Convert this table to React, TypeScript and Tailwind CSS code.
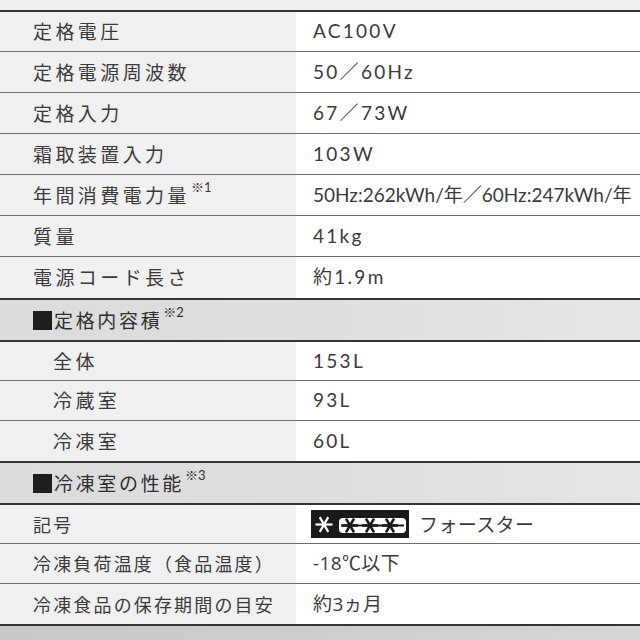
import React from "react";

const jp = { fontFamily: '"Noto Sans CJK JP", sans-serif' };
const lat = { fontFamily: 'Lato, "Noto Sans CJK JP", sans-serif' };
const os = { fontFamily: '"Open Sans", "Noto Sans CJK JP", sans-serif' };

function Sup({ n }: { n: string }) {
  return (
    <span className="relative -top-[7px] ml-[1px] text-[13px] tracking-normal" style={lat}>
      ※{n}
    </span>
  );
}

function Row({
  label,
  value,
  indent = false,
  valueStyle = lat,
  valueCls = "text-[19px] tracking-[0.12em]",
  labelCls = "text-[19px] tracking-[0.18em]",
  h = "h-[41px]",
}: {
  label: React.ReactNode;
  value: React.ReactNode;
  indent?: boolean;
  valueStyle?: React.CSSProperties;
  valueCls?: string;
  labelCls?: string;
  h?: string;
}) {
  return (
    <div className={`flex ${h}`}>
      <div
        className={`w-[296px] shrink-0 bg-[#f0f0f0] flex items-center ${indent ? "pl-[53px]" : "pl-[33px]"} text-[#3a3a3a] whitespace-nowrap ${labelCls}`}
        style={jp}
      >
        {label}
      </div>
      <div
        className={`flex-1 bg-white flex items-center pl-[17px] text-[#3a3a3a] whitespace-nowrap overflow-hidden ${valueCls}`}
        style={valueStyle}
      >
        {value}
      </div>
    </div>
  );
}

function Header({ children }: { children: React.ReactNode }) {
  return (
    <div
      className="h-[40px] flex items-center pl-[33px] bg-gradient-to-r from-[#dcdcdc] via-[#dedede] to-[#e6e6e6] text-[#2e2e2e] text-[19px] tracking-[0.14em]"
      style={jp}
    >
      <span className="inline-block w-[19px] h-[19px] bg-[#1e1e1e] mr-[2px]" />
      {children}
    </div>
  );
}

const Dark = () => <div className="h-[2px] bg-[#353535]" />;

function Badge() {
  const star = (cx: number, cy: number, r: number, color: string, w: number) => {
    const dx = r * Math.cos(Math.PI / 3);
    const dy = r * Math.sin(Math.PI / 3);
    return (
      <g stroke={color} strokeWidth={w} strokeLinecap="butt">
        <line x1={cx - r} y1={cy} x2={cx + r} y2={cy} />
        <line x1={cx - dx} y1={cy - dy} x2={cx + dx} y2={cy + dy} />
        <line x1={cx + dx} y1={cy - dy} x2={cx - dx} y2={cy + dy} />
      </g>
    );
  };
  return (
    <svg width="98" height="28" viewBox="0 0 98 28" className="shrink-0">
      <rect x="0" y="0" width="98" height="28" fill="#1a1a1a" />
      {star(13, 14.5, 8.5, "#ffffff", 2.2)}
      <rect x="28" y="8" width="67" height="15" rx="4" fill="#ffffff" />
      <line x1="30" y1="15.5" x2="93" y2="15.5" stroke="#1a1a1a" strokeWidth="2" />
      {star(39, 15.5, 8, "#1a1a1a", 2.6)}
      {star(59, 15.5, 8, "#1a1a1a", 2.6)}
      {star(79, 15.5, 8, "#1a1a1a", 2.6)}
    </svg>
  );
}

export default function App() {
  const s3label = "text-[18px] tracking-[0.12em]";
  const s3val = "text-[19px] tracking-[0.02em]";
  return (
    <div className="w-[640px] h-[640px] overflow-hidden bg-[#eeeeee] flex flex-col">
      <div className="h-[10px] shrink-0 bg-[#eeeeee]" />
      <Dark />
      <div className="flex flex-col divide-y divide-[#6e6e6e]">
        <Row h="h-[40px]" label="定格電圧" value="AC100V" />
        <Row label="定格電源周波数" value="50／60Hz" />
        <Row label="定格入力" value="67／73W" />
        <Row label="霜取装置入力" value="103W" />
        <Row
          label={
            <>
              年間消費電力量<Sup n="1" />
            </>
          }
          value="50Hz:262kWh/年／60Hz:247kWh/年"
          valueCls="text-[19px] tracking-[0em]"
        />
        <Row label="質量" value="41kg" />
        <Row label="電源コード長さ" value="約1.9m" />
      </div>
      <Dark />
      <Header>
        定格内容積<Sup n="2" />
      </Header>
      <Dark />
      <div className="flex flex-col divide-y divide-[#6e6e6e]">
        <Row indent h="h-[39px]" label="全体" value="153L" />
        <Row indent h="h-[40px]" label="冷蔵室" value="93L" />
        <Row indent h="h-[40px]" label="冷凍室" value="60L" />
      </div>
      <Dark />
      <Header>
        冷凍室の性能<Sup n="3" />
      </Header>
      <Dark />
      <div className="flex flex-col divide-y divide-[#6e6e6e]">
        <Row
          h="h-[39px]"
          labelCls={s3label}
          label="記号"
          valueStyle={os}
          valueCls={s3val}
          value={
            <span className="flex items-center">
              <span className="-ml-[2px] flex">
                <Badge />
              </span>
              <span className="ml-[10px]" style={jp}>
                フォースター
              </span>
            </span>
          }
        />
        <Row h="h-[40px]" labelCls={s3label} label="冷凍負荷温度（食品温度）" valueStyle={os} valueCls={s3val} value="-18℃以下" />
        <Row h="h-[40px]" labelCls={s3label} label="冷凍食品の保存期間の目安" valueStyle={os} valueCls={s3val} value="約3ヵ月" />
      </div>
      <Dark />
      <div className="flex-1 bg-gradient-to-r from-[#c9c9c9] via-[#cdcdcd] to-[#d6d6d6]" />
    </div>
  );
}
